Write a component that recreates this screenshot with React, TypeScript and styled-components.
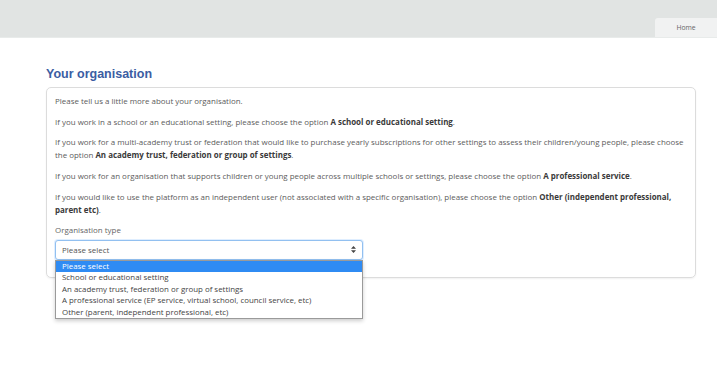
import React from "react";
import styled, { createGlobalStyle } from "styled-components";

const Global = createGlobalStyle`
  html, body { margin: 0; padding: 0; background: #fff; }
  body { font-family: "Open Sans", "Noto Sans", sans-serif; }
  * { box-sizing: border-box; }
`;

const Page = styled.div`
  width: 717px;
  height: 369px;
  overflow: hidden;
  background: #fff;
`;

const Header = styled.header`
  height: 38px;
  background: #e1e4e3;
  display: flex;
  align-items: flex-end;
  justify-content: flex-end;
  border-bottom: 1px solid #e8ebea;
`;

const Tab = styled.div`
  width: 62px;
  height: 19px;
  background: #f1f2f2;
  border-top-left-radius: 3px;
  display: flex;
  align-items: center;
  justify-content: center;
  font-size: 6.8px;
  color: #666;
`;

const Main = styled.main`
  padding: 29px 21px 0 46px;
`;

const Title = styled.h1`
  margin: 0 0 5px 0;
  font-family: "Liberation Sans", Arial, sans-serif;
  font-weight: bold;
  font-size: 12.5px;
  line-height: 15px;
  color: #3b5da3;
`;

const Card = styled.section`
  border: 1px solid #dcdcdc;
  border-radius: 5px;
  box-shadow: 0 1px 2px rgba(0, 0, 0, 0.06);
  padding: 7px 8px 16px 8px;
  height: 191px;
`;

const Para = styled.p`
  margin: 0 0 7.7px 0;
  font-size: 7.95px;
  line-height: 13px;
  color: #5c5c5c;
  b { color: #3a3a3a; font-weight: 700; }
`;

const Label = styled.div`
  font-size: 7.95px;
  line-height: 13px;
  color: #666;
  margin: 0 0 2.5px 0;
`;

const SelectWrap = styled.div`
  position: relative;
  width: 308px;
`;

const SelectBox = styled.div`
  height: 20px;
  border: 1px solid #92c0f0;
  border-radius: 3px;
  box-shadow: 0 0 0 1px rgba(128, 189, 255, 0.25);
  display: flex;
  align-items: center;
  justify-content: space-between;
  padding: 0 6px 0 6px;
  font-size: 7.95px;
  color: #555;
  background: #fff;
`;

const List = styled.ul`
  position: absolute;
  top: 20px;
  left: 0;
  width: 308px;
  margin: 0;
  padding: 0;
  list-style: none;
  border: 1px solid #9a9a9a;
  background: #fff;
  box-shadow: 0 2px 4px rgba(0, 0, 0, 0.2);
`;

const Option = styled.li<{ $active?: boolean }>`
  height: 11.4px;
  line-height: 11.4px;
  padding: 0 6px;
  font-size: 7.9px;
  white-space: nowrap;
  background: ${(p) => (p.$active ? "#2f8bf3" : "#fff")};
  color: ${(p) => (p.$active ? "#fff" : "#444")};
`;

const Arrows = () => (
  <svg width="5" height="7" viewBox="0 0 5 7">
    <path d="M2.5 0 L5 2.8 L0 2.8 Z M2.5 7 L5 4.2 L0 4.2 Z" fill="#444" />
  </svg>
);

const options = [
  "Please select",
  "School or educational setting",
  "An academy trust, federation or group of settings",
  "A professional service (EP service, virtual school, council service, etc)",
  "Other (parent, independent professional, etc)",
];

export default function App() {
  return (
    <Page>
      <Global />
      <Header>
        <Tab>Home</Tab>
      </Header>
      <Main>
        <Title>Your organisation</Title>
        <Card>
          <Para>Please tell us a little more about your organisation.</Para>
          <Para>
            If you work in a school or an educational setting, please choose the option{" "}
            <b>A school or educational setting</b>.
          </Para>
          <Para>
            If you work for a multi-academy trust or federation that would like to purchase yearly
            subscriptions for other settings to assess their children/young people, please choose
            the option <b>An academy trust, federation or group of settings</b>.
          </Para>
          <Para>
            If you work for an organisation that supports children or young people across multiple
            schools or settings, please choose the option <b>A professional service</b>.
          </Para>
          <Para>
            If you would like to use the platform as an independent user (not associated with a
            specific organisation), please choose the option{" "}
            <b>Other (independent professional, parent etc)</b>.
          </Para>
          <Label>Organisation type</Label>
          <SelectWrap>
            <SelectBox>
              <span>Please select</span>
              <Arrows />
            </SelectBox>
            <List>
              {options.map((o, i) => (
                <Option key={o} $active={i === 0}>
                  {o}
                </Option>
              ))}
            </List>
          </SelectWrap>
        </Card>
      </Main>
    </Page>
  );
}
